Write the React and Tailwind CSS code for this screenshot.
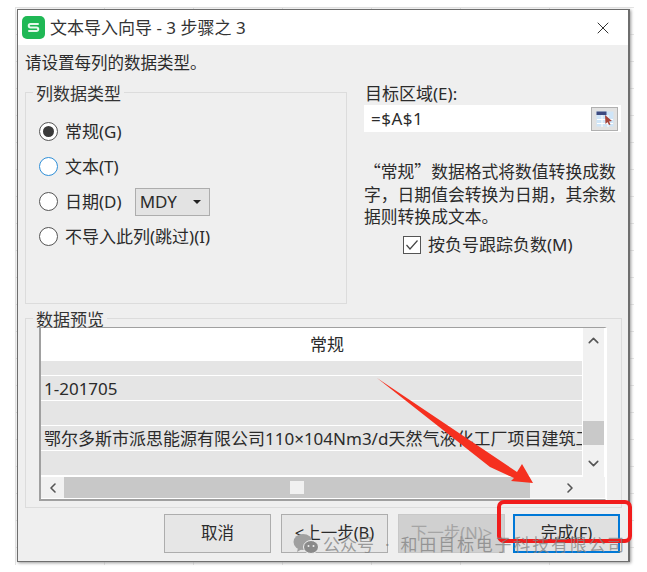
import { X, ChevronUp, ChevronDown, ChevronLeft, ChevronRight } from 'lucide-react';

const FONT = "font-['Noto_Sans','Noto_Sans_CJK_SC',sans-serif]";

function Radio({ label, checked, focused, children }) {
  return (
    <div className="flex items-center h-[35px]">
      <span className={`w-[19px] h-[19px] rounded-full border-[1.5px] bg-white flex items-center justify-center ${focused ? 'border-[#2f8fd8]' : 'border-[#555]'}`}>
        {checked && <span className="w-[11px] h-[11px] rounded-full bg-[#3a3a3a]" />}
      </span>
      <span className="ml-[7px]">{label}</span>
      {children}
    </div>
  );
}

function Btn({ children, className = '' }) {
  return (
    <button className={`w-[107px] h-[39px] flex items-center justify-center border ${className}`}>
      {children}
    </button>
  );
}

function Group({ title, className = '', children }) {
  return (
    <div className={`border border-[#dcdcdc] ${className}`}>
      <div className="-mt-[8px] -ml-[6px] w-fit h-[16px] px-[3px] bg-[#efefef] text-[#333] flex items-center">{title}</div>
      {children}
    </div>
  );
}

const rows = [
  { h: 'h-[14px]', text: '' },
  { h: 'h-[24px]', text: '1-201705' },
  { h: 'h-[24px]', text: '' },
  { h: 'h-[24px]', text: '鄂尔多斯市派思能源有限公司110×104Nm3/d天然气液化工厂项目建筑工' },
  { h: 'h-[24px]', text: '' },
];

export default function App() {
  return (
    <div className={`w-[647px] h-[572px] bg-white relative overflow-hidden text-[17px] leading-none text-[#2b2b2b] ${FONT}`}>
      {/* spreadsheet behind the dialog */}
      <div className="ml-[15px] mt-[7px] w-[619px] h-[558px] p-[2px] bg-[linear-gradient(#e4e4e4_1px,transparent_1px),linear-gradient(90deg,#e4e4e4_1px,transparent_1px)] bg-[size:89px_27px]">
        <div className="w-[613px] h-[553px] border border-[#6e6e6e] border-r-2 shadow-[1px_1px_3px_#999] bg-[#efefef] flex flex-col">
          {/* Title bar */}
          <div className="h-[35px] bg-white flex items-center shrink-0 pl-[4px] pr-[15px]">
            <svg width="23" height="23" viewBox="0 0 23 23" className="shrink-0">
              <rect width="23" height="23" rx="5" fill="#1fb855" />
              <path d="M16 8H8.500a1.600 1.600 0 0 0 0 3.500h6a1.600 1.600 0 0 1 0 3.500H7" fill="none" stroke="#e6f9ec" strokeWidth="2" strokeLinecap="round" />
            </svg>
            <span className="ml-[5px] text-[#333]">文本导入向导 - 3 步骤之 3</span>
            <X className="ml-auto text-[#333]" size={20} strokeWidth={1.2} />
          </div>

          <div className="pl-[7px] pt-[10px] h-[29px] shrink-0 text-[16.5px]">请设置每列的数据类型。</div>

          {/* Top section */}
          <div className="flex mt-[18px] shrink-0 pl-[7px]">
            <Group title="列数据类型" className="w-[322px] h-[212px] pl-[13px]">
              <div className="pt-[13px]">
                <Radio label="常规(G)" checked />
                <Radio label="文本(T)" focused />
                <Radio label="日期(D)">
                  <div className="ml-[13px] w-[75px] h-[28px] bg-[#e3e3e3] border border-[#adadad] flex items-center pl-[4px] pr-[8px]">
                    <span>MDY</span>
                    <span className="ml-auto w-0 h-0 border-x-[4px] border-x-transparent border-t-[4px] border-t-[#222]" />
                  </div>
                </Radio>
                <Radio label="不导入此列(跳过)(I)" />
              </div>
            </Group>

            <div className="ml-[17px] w-[257px]">
              <div className="-mt-[11px] h-[24px] flex items-center pl-[1px]">目标区域(E):</div>
              <div className="h-[27px] bg-white flex items-center pl-[7px]">
                <span className="tracking-[0.5px]">=$A$1</span>
                <span className="ml-auto mr-[3px] w-[27px] h-[24px] bg-[#e2e2e2] border border-[#b0b0b0] flex items-center justify-center">
                  <svg width="18" height="16" viewBox="0 0 18 16">
                    <rect x="0.5" y="0.5" width="17" height="15" fill="#cfe5f8" />
                    <path d="M1 8.500h16M1 12.500h16M6 4v12M12 4v12" stroke="#fff" />
                    <rect x="0.5" y="0.5" width="10" height="3.500" fill="#3d4a80" />
                    <path d="M9 4l7 6-3 .5 1.500 3-1.500.5-1.500-3-2 2z" fill="#a8443a" />
                  </svg>
                </span>
              </div>
              <p className="mt-[28px] leading-[22.5px] text-[16.8px] whitespace-nowrap font-['Noto_Sans_CJK_SC',sans-serif]">
                “常规”数据格式将数值转换成数<br />
                字，日期值会转换为日期，其余数<br />
                据则转换成文本。
              </p>
              <div className="mt-[5px] ml-[39px] flex items-center h-[24px]">
                <span className="w-[18px] h-[18px] border border-[#555] bg-white flex items-center justify-center">
                  <svg width="14" height="12" viewBox="0 0 14 12">
                    <path d="M1.500 6l3.500 4 7.500-8.500" fill="none" stroke="#444" strokeWidth="1.2" />
                  </svg>
                </span>
                <span className="ml-[7px]">按负号跟踪负数(M)</span>
              </div>
            </div>
          </div>

          {/* Data preview */}
          <Group title="数据预览" className="ml-[7px] mt-[14px] w-[597px] h-[190px] shrink-0 pl-[13px]">
            <div className="w-[568px] h-[174px] border-2 border-t-[1px] border-[#a0a0a0] border-r-white bg-white flex flex-col">
              <div className="flex h-[149px] shrink-0">
                <div className="w-[541px] flex flex-col">
                  <div className="h-[33px] flex items-center justify-center shrink-0 pl-[31px]">常规</div>
                  <div className="flex flex-col gap-[1px]">
                    {rows.map((r, i) => (
                      <div key={i} className={`${r.h} bg-[#e5e5e5] flex items-center pl-[3px] overflow-hidden whitespace-nowrap`}>
                        {r.text}
                      </div>
                    ))}
                  </div>
                </div>
                <div className="w-[21px] ml-[1px] bg-[#f1f1f1] flex flex-col items-center pt-[4px]">
                  <ChevronUp size={17} strokeWidth={2.2} className="text-[#555]" />
                  <div className="w-full h-[24px] mt-[72px] bg-[#c9c9c9]" />
                  <ChevronDown size={17} strokeWidth={2.2} className="mt-[10px] text-[#555]" />
                </div>
              </div>
              <div className="h-[21px] bg-[#f1f1f1] flex items-center shrink-0">
                <span className="w-[23px] flex justify-center">
                  <ChevronLeft size={16} strokeWidth={2.4} className="text-[#555]" />
                </span>
                <div className="w-[466px] h-[21px] bg-[#c8c8c8] flex items-center pl-[226px]">
                  <span className="w-[14px] h-[13px] bg-[#f1f1f1]" />
                </div>
                <ChevronRight size={16} strokeWidth={2.4} className="ml-[32px] text-[#555]" />
              </div>
            </div>
          </Group>

          {/* Buttons */}
          <div className="flex pl-[146px] gap-[10px] mt-[6px] text-[16.5px]">
            <Btn className="bg-[#e6e6e6] border-[#adadad]">取消</Btn>
            <Btn className="bg-[#e6e6e6] border-[#adadad]">&lt;上一步(B)</Btn>
            <Btn className="bg-[#d0d0d0] border-[#c8c8c8] text-[#a5a5a5]">下一步(N)&gt;</Btn>
            <Btn className="bg-[#e0e0e0] border-2 border-[#0078d7] -ml-[2px]">完成(F)</Btn>
          </div>
        </div>
      </div>

      {/* Red annotation arrow and box */}
      <svg className="absolute left-0 top-0 pointer-events-none" width="647" height="572" viewBox="0 0 647 572">
        <path d="M377 378L517 472L522 464L533 483L511 481L514 478L490 467z" fill="#f5301f" />
        <rect x="499" y="502" width="131" height="39" rx="5" fill="none" stroke="#f11c1c" strokeWidth="4" />
      </svg>

      {/* Watermark */}
      <div className="absolute left-[293px] top-[533px] flex items-center text-[#808080]/75 whitespace-nowrap">
        <svg width="26" height="22" viewBox="0 0 26 22" className="mr-[4px]">
          <ellipse cx="10" cy="9" rx="9.500" ry="8" fill="#a0a0a0" />
          <path d="M5 15l-1 4 5-3z" fill="#a0a0a0" />
          <ellipse cx="18" cy="14" rx="7.500" ry="6.500" fill="#8a8a8a" stroke="#efefef" />
          <circle cx="15.500" cy="13" r="1" fill="#efefef" />
          <circle cx="20.500" cy="13" r="1" fill="#efefef" />
        </svg>
        <span>公众号</span>
        <span className="mx-[11px]">·</span>
        <span className="tracking-[1.8px]">和田目标电子科技有限公司</span>
      </div>
    </div>
  );
}
